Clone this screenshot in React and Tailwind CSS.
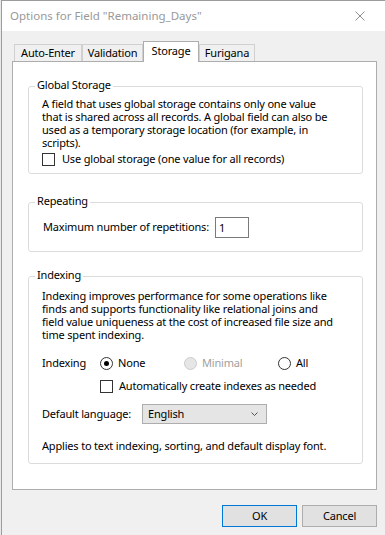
import React from "react";

const font = "font-['Segoe_UI','Noto_Sans',sans-serif]";

function Tab({ label, width, active }) {
    if (active) {
        return (
            <div
                className={`${width} h-[21px] -mb-px relative z-10 bg-white border border-b-0 border-[#adadad] flex justify-center pt-[1px] leading-[16px]`}
            >
                {label}
            </div>
        );
    }
    return (
        <div
            className={`${width} h-[17px] bg-[#f0f0f0] border border-b-0 border-[#d0d0d0] flex justify-center leading-[16px]`}
        >
            {label}
        </div>
    );
}

function Group({ title, className, children }) {
    return (
        <div className={`relative border border-[#dcdcdc] rounded-[3px] ${className}`}>
            <span className="absolute left-[6px] top-[-10px] bg-white px-[2px] leading-[15px]">
                {title}
            </span>
            {children}
        </div>
    );
}

function Checkbox() {
    return <span className="w-[13px] h-[13px] border border-[#333333] bg-white shrink-0" />;
}

function Radio({ checked, disabled }) {
    return (
        <span
            className={`w-[13px] h-[13px] rounded-full border shrink-0 flex items-center justify-center ${
                disabled ? "border-[#cccccc] bg-[#e6e6e6]" : "border-[#333333] bg-white"
            }`}
        >
            {checked && <span className="w-[5px] h-[5px] rounded-full bg-black" />}
        </span>
    );
}

export default function App() {
    return (
        <div className="w-[385px] h-[535px] bg-[#e9e9e9] pl-px overflow-hidden">
            <div
                className={`h-full border-l border-t border-[#9c9c9c] bg-[#f0f0f0] flex flex-col text-[11px] tracking-[-0.18px] text-black whitespace-nowrap ${font}`}
            >
                {/* title bar */}
                <div className="h-[30px] bg-white flex items-center justify-between pl-[8px] pr-[20px]">
                    <span className="text-[11.5px] tracking-normal text-[#999999] leading-[16px]">
                        Options for Field "Remaining_Days"
                    </span>
                    <svg width="10" height="10" viewBox="0 0 10 10">
                        <path d="M0.5 0.5 L9.5 9.5 M9.5 0.5 L0.5 9.5" stroke="#8c8c8c" strokeWidth="1" fill="none" />
                    </svg>
                </div>

                <div className="pl-[10px] pr-[8px] pt-[10px] flex flex-col">
                    {/* tabs */}
                    <div className="flex items-end pl-[2px]">
                        <Tab label="Auto-Enter" width="w-[68px]" />
                        <Tab label="Validation" width="w-[61px]" />
                        <Tab label="Storage" width="w-[56px]" active />
                        <Tab label="Furigana" width="w-[56px]" />
                    </div>

                    {/* panel */}
                    <div className="h-[429px] bg-white border border-[#adadad] pl-[15px] pr-[13px] pt-[24px] flex flex-col">
                        <Group title="Global Storage" className="pl-[13px] pt-[10px] pb-[6px]">
                            <p className="leading-[13px]">
                                A field that uses global storage contains only one value
                                <br />
                                that is shared across all records. A global field can also be
                                <br />
                                used as a temporary storage location (for example, in
                                <br />
                                scripts).
                            </p>
                            <label className="mt-[3px] h-[15px] flex items-center gap-[7px]">
                                <Checkbox />
                                <span>Use global storage (one value for all records)</span>
                            </label>
                        </Group>

                        <Group title="Repeating" className="mt-[28px] pl-[14px] pt-[14px] pb-[13px]">
                            <div className="h-[21px] flex items-center gap-[6px]">
                                <span>Maximum number of repetitions:</span>
                                <div className="w-[34px] h-[21px] border border-[#7a7a7a] bg-white pl-[3px] leading-[19px]">
                                    1
                                </div>
                            </div>
                        </Group>

                        <Group title="Indexing" className="mt-[24px] pl-[13px] pt-[12px] pb-[11px]">
                            <p className="leading-[13px]">
                                Indexing improves performance for some operations like
                                <br />
                                finds and supports functionality like relational joins and
                                <br />
                                field value uniqueness at the cost of increased file size and
                                <br />
                                time spent indexing.
                            </p>

                            <div className="mt-[15px] h-[15px] flex items-center">
                                <span className="w-[58px]">Indexing</span>
                                <label className="w-[84px] flex items-center gap-[5px]">
                                    <Radio checked />
                                    <span>None</span>
                                </label>
                                <label className="w-[94px] flex items-center gap-[5px] text-[#a0a0a0]">
                                    <Radio disabled />
                                    <span>Minimal</span>
                                </label>
                                <label className="flex items-center gap-[5px]">
                                    <Radio />
                                    <span>All</span>
                                </label>
                            </div>

                            <label className="mt-[8px] ml-[58px] h-[15px] flex items-center gap-[6px]">
                                <Checkbox />
                                <span>Automatically create indexes as needed</span>
                            </label>

                            <div className="mt-[10px] h-[20px] flex items-center">
                                <span className="w-[100px]">Default language:</span>
                                <div className="w-[125px] h-[20px] border border-[#adadad] bg-[#e5e5e5] flex items-center justify-between pl-[5px] pr-[8px]">
                                    <span>English</span>
                                    <svg width="7" height="4" viewBox="0 0 7 4">
                                        <path d="M0.5 0.5 L3.5 3.5 L6.5 0.5" stroke="#555555" strokeWidth="1" fill="none" />
                                    </svg>
                                </div>
                            </div>

                            <p className="mt-[15px] leading-[13px]">
                                Applies to text indexing, sorting, and default display font.
                            </p>
                        </Group>
                    </div>

                    {/* buttons */}
                    <div className="mt-[15px] flex justify-end gap-[5px]">
                        <button className="w-[75px] h-[22px] bg-[#e1e1e1] border border-[#0078d7]">OK</button>
                        <button className="w-[75px] h-[22px] bg-[#e1e1e1] border border-[#adadad]">Cancel</button>
                    </div>
                </div>
            </div>
        </div>
    );
}
